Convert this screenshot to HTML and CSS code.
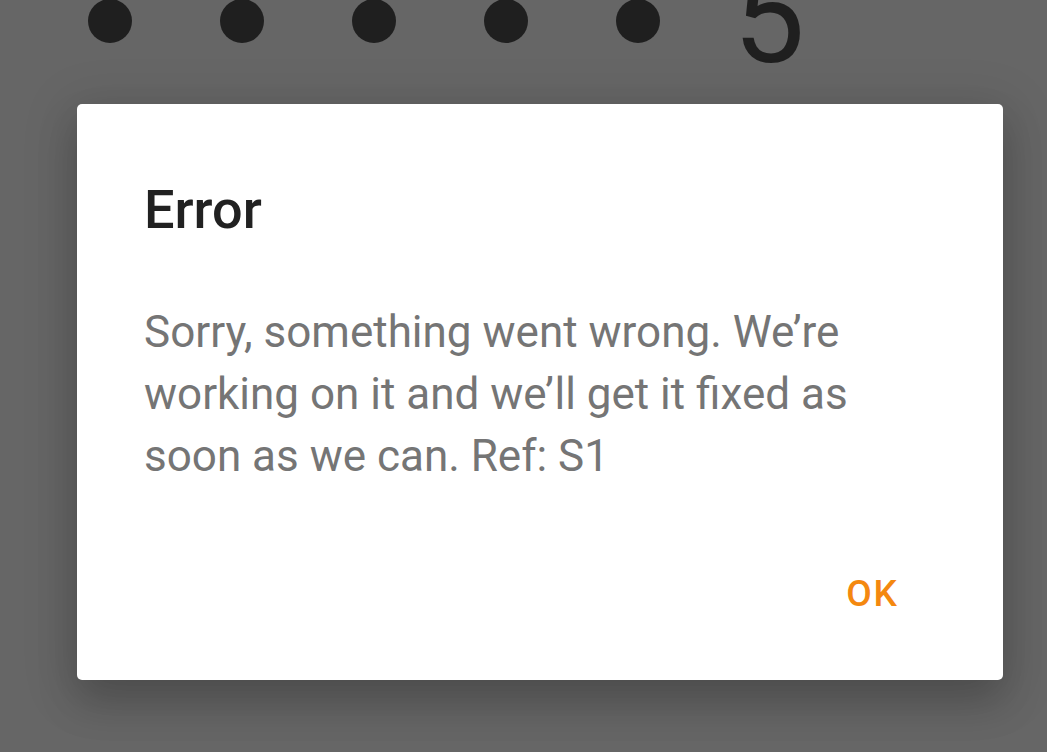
FILE: index.html
```html
<!DOCTYPE html>
<html lang="en">
<head>
    <meta charset="UTF-8">
    <meta name="viewport" content="width=device-width, initial-scale=1.0">
    <title>PIN</title>
    <link rel="stylesheet" href="styles.css">
</head>
<body>
    <!-- PIN entry behind the dialog -->
    <div class="pin-row">
        <span class="dot"></span>
        <span class="dot"></span>
        <span class="dot"></span>
        <span class="dot"></span>
        <span class="dot"></span>
        <span class="digit">5</span>
    </div>

    <div class="dialog">
        <h1 class="dialog-title">Error</h1>
        <p class="dialog-message">Sorry, something went wrong. We’re working on it and we’ll get it fixed as soon as we can. Ref: S1</p>
        <div class="dialog-actions">
            <button class="dialog-button">OK</button>
        </div>
    </div>
</body>
</html>
```

FILE: styles.css
```css
html, body {
    height: 100%;
}
body {
    margin: 0;
    background-color: #666666;
    font-family: Roboto, "Noto Sans", sans-serif;
    overflow: hidden;
}
.pin-row {
    display: flex;
    align-items: center;
    height: 42px;
    padding-left: 88px;
    gap: 88px;
}
.dot {
    width: 44px;
    height: 44px;
    border-radius: 50%;
    background-color: #1f1f1f;
    flex: none;
}
.digit {
    margin-left: -15px;
    margin-top: -6px;
    font-size: 128px;
    font-weight: 400;
    line-height: 128px;
    color: #1f1f1f;
}
.dialog {
    position: absolute;
    left: 77px;
    top: 104px;
    width: 926px;
    box-sizing: border-box;
    height: 576px;
    padding: 74px 67px 0 67px;
    background-color: #fff;
    border-radius: 5px;
    box-shadow: 0 22px 40px rgba(0, 0, 0, 0.18), 0 8px 50px 10px rgba(0, 0, 0, 0.1);
    display: flex;
    flex-direction: column;
}
.dialog-title {
    margin: 0;
    font-size: 54px;
    font-weight: 500;
    line-height: 64px;
    color: #212121;
}
.dialog-message {
    margin: 59px 0 0 0;
    font-size: 44px;
    line-height: 62px;
    color: #757575;
}
.dialog-actions {
    display: flex;
    justify-content: flex-end;
    margin-top: auto;
    padding-bottom: 66px;
}
.dialog-button {
    border: none;
    background: none;
    padding: 0 37px 0 0;
    font-family: Roboto, "Noto Sans", sans-serif;
    font-size: 37px;
    font-weight: 500;
    letter-spacing: 2px;
    line-height: 41px;
    color: #f4880f;
    cursor: pointer;
}
```
